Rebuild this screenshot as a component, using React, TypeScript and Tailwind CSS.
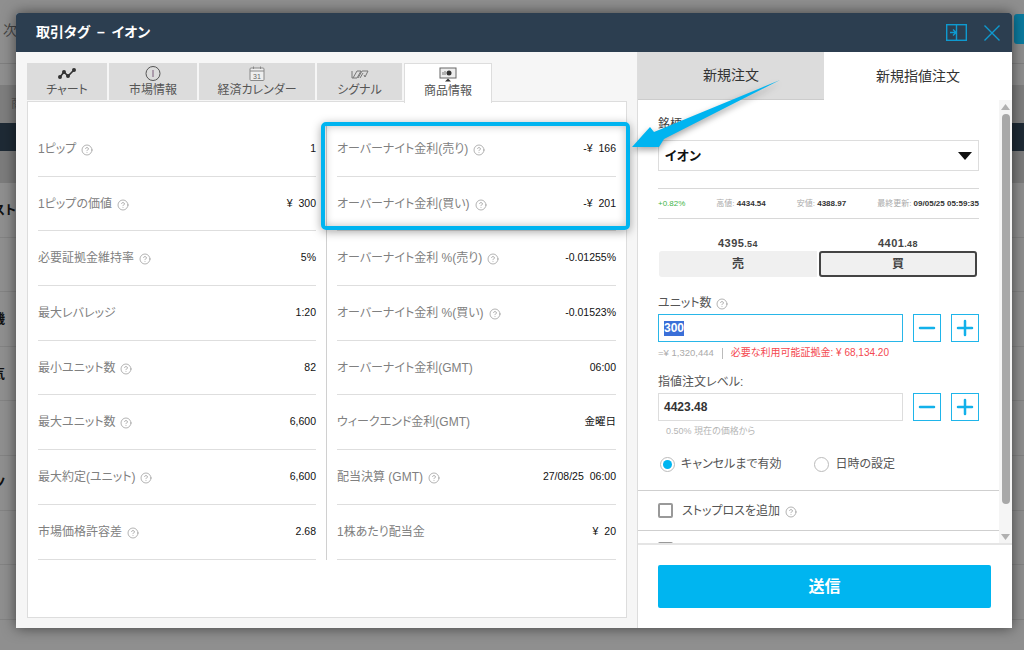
import { CircleHelp, Minus, Plus } from "lucide-react";
import type { ReactNode } from "react";

const JP = "font-['Liberation_Sans','Noto_Sans_CJK_JP',sans-serif] [font-feature-settings:'palt']";

const leftRows = [
  { label: "1ピップ", value: "1", help: true },
  { label: "1ピップの価値", value: "¥ 300", help: true },
  { label: "必要証拠金維持率", value: "5%", help: true },
  { label: "最大レバレッジ", value: "1:20", help: false },
  { label: "最小ユニット数", value: "82", help: true },
  { label: "最大ユニット数", value: "6,600", help: true },
  { label: "最大約定(ユニット)", value: "6,600", help: true },
  { label: "市場価格許容差", value: "2.68", help: true },
];

const rightRows = [
  { label: "オーバーナイト金利(売り)", value: "-¥ 166", help: true },
  { label: "オーバーナイト金利(買い)", value: "-¥ 201", help: true },
  { label: "オーバーナイト金利 %(売り)", value: "-0.01255%", help: true },
  { label: "オーバーナイト金利 %(買い)", value: "-0.01523%", help: true },
  { label: "オーバーナイト金利(GMT)", value: "06:00", help: false },
  { label: "ウィークエンド金利(GMT)", value: "金曜日", help: false },
  { label: "配当決算 (GMT)", value: "27/08/25 06:00", help: true },
  { label: "1株あたり配当金", value: "¥ 20", help: false },
];

const backgroundRows = [
  { text: "スト", pad: "pr-[1008px]" },
  { text: "", pad: "" },
  { text: "機", pad: "pr-[1019px]" },
  { text: "気", pad: "pr-[1019px]" },
  { text: "", pad: "" },
  { text: "ノ", pad: "pr-[1019px]" },
  { text: "", pad: "" },
  { text: "", pad: "" },
];

const Help = () => (
  <CircleHelp size={12} strokeWidth={1.5} className="ml-[5px] mt-[2px] shrink-0 text-[#999]" />
);

const InfoRow = ({ label, value, help }: { label: string; value: string; help: boolean }) => (
  <div className="flex h-[54.7px] items-center justify-between border-b-[1.5px] border-[#dedede]">
    <div className="flex items-center whitespace-nowrap text-[12px] text-[#808080]">
      {label}
      {help && <Help />}
    </div>
    <div className="whitespace-nowrap text-[10.5px] text-[#111] [word-spacing:3px]">{value}</div>
  </div>
);

const TabIcon = ({ kind }: { kind: string }) => {
  if (kind === "chart") {
    return (
      <svg width="18" height="12" viewBox="0 0 18 12" fill="none" stroke="#333" strokeWidth="1.6">
        <path d="M2 9 L6 4 L10 8 L16 2" />
        <circle cx="2" cy="9" r="1.2" fill="#333" />
        <circle cx="6" cy="4" r="1.2" fill="#333" />
        <circle cx="10" cy="8" r="1.2" fill="#333" />
        <circle cx="16" cy="2" r="1.2" fill="#333" />
      </svg>
    );
  }
  if (kind === "info") {
    return (
      <svg width="16" height="15" viewBox="0 0 16 15" fill="none" stroke="#555" strokeWidth="1">
        <circle cx="8" cy="7.5" r="7" />
        <path d="M8 4 V11" stroke="#7a5a7a" />
      </svg>
    );
  }
  if (kind === "calendar") {
    return (
      <svg width="16" height="15" viewBox="0 0 16 15" fill="none" stroke="#888" strokeWidth="1">
        <rect x="1" y="2" width="14" height="12.5" rx="1" fill="#eee" />
        <path d="M1 5 H15 M4.5 0.5 V3 M11.5 0.5 V3" />
        <text x="8" y="12.5" fontSize="7" textAnchor="middle" fill="#666" stroke="none">31</text>
      </svg>
    );
  }
  if (kind === "signal") {
    return (
      <svg width="18" height="12" viewBox="0 0 18 12" fill="none" stroke="#777" strokeWidth="1">
        <path d="M1 3 V10 H6 L10 3 H6 L2 10" />
        <path d="M7 10 L11 3 H17 L14 9 L13 7 M9 10 L12 5" />
      </svg>
    );
  }
  return (
    <svg width="18" height="15" viewBox="0 0 18 15" fill="none">
      <rect x="1" y="1" width="16" height="10" fill="#eee" stroke="#666" strokeWidth="1" />
      <circle cx="10" cy="6" r="2.5" fill="#333" />
      <path d="M4 8 V5 M6 8 V4" stroke="#777" />
      <path d="M6 14.5 L9 11.5 L12 14.5 Z" fill="#333" />
    </svg>
  );
};

const Tab = ({ label, icon, width, active }: { label: string; icon: string; width: string; active?: boolean }) => (
  <div
    className={`${width} flex shrink-0 flex-col items-center text-[12px] leading-[16px] text-[#555] ${
      active
        ? "relative z-10 -mb-[2px] h-[40px] border border-b-0 border-[#ddd] bg-white pt-[3px]"
        : "h-[37px] bg-[#dcdcdc] pt-[3px]"
    }`}
  >
    <div className="flex h-[15px] items-center">
      <TabIcon kind={icon} />
    </div>
    <span className="mt-[1px]">{label}</span>
  </div>
);

const StepButton = ({ children }: { children: ReactNode }) => (
  <div className="flex h-[28px] w-[28px] items-center justify-center border-[1.5px] border-[#1fb5ea] text-[#12b1ea]">
    {children}
  </div>
);

const Stepper = () => (
  <div className="ml-[10px] flex gap-[10px]">
    <StepButton>
      <Minus size={24} strokeWidth={2.5} />
    </StepButton>
    <StepButton>
      <Plus size={24} strokeWidth={2.5} />
    </StepButton>
  </div>
);

const Price = ({ whole, decimals }: { whole: string; decimals: string }) => (
  <span className="h-[14px]">
    {whole}
    <span className="text-[9px]">{decimals}</span>
  </span>
);

const StatLabel = ({ label, value }: { label: string; value: string }) => (
  <span className="whitespace-nowrap">
    <span className="text-[#aaa]">{label} </span>
    <span className="font-semibold text-[#333]">{value}</span>
  </span>
);

const OrderForm = () => (
  <div className="flex min-h-0 flex-1 overflow-hidden">
    <div className="min-w-0 flex-1 overflow-hidden">
      <div className="px-[20px]">
        <div className="pt-[16px] text-[12px] leading-[16px] text-[#444]">銘柄</div>
        <div className="mt-[8px] flex h-[31px] items-center justify-between border border-[#ddd] pl-[6px] pr-[6px] text-[13px] font-bold text-[#111]">
          イオン
          <svg width="14" height="8" viewBox="0 0 14 8">
            <path d="M0 0 H14 L7 8 Z" fill="#111" />
          </svg>
        </div>
        <div className="mt-[17px] flex h-[31px] items-center justify-between border-y border-[#d8d8d8] text-[8px]">
          <span className="text-[#43b54a]">+0.82%</span>
          <StatLabel label="高値:" value="4434.54" />
          <StatLabel label="安値:" value="4388.97" />
          <StatLabel label="最終更新:" value="09/05/25 05:59:35" />
        </div>
        <div className="mt-[17px] grid h-[14px] w-[320px] grid-cols-2 text-center text-[11px] font-bold leading-[14px] tracking-[0.4px] text-[#444]">
          <Price whole="4395" decimals=".54" />
          <Price whole="4401" decimals=".48" />
        </div>
        <div className="ml-[1px] mt-[1px] flex h-[26px] w-[318px] gap-[2px] text-[12px] font-bold text-[#444]">
          <div className="flex w-[158px] items-center justify-center rounded-l-[3px] bg-[#f0f0f0]">売</div>
          <div className="flex w-[158px] items-center justify-center rounded-[3px] border-2 border-[#444] bg-[#f0f0f0]">買</div>
        </div>
        <div className="mt-[17px] flex h-[18px] items-center text-[12px] text-[#555]">
          ユニット数
          <Help />
        </div>
        <div className="mt-[2px] flex">
          <div className="flex h-[28px] w-[245px] items-center border border-[#29b6e8] pl-[5px] text-[12px] font-bold">
            <span className="bg-[#3a6fd8] leading-[15px] text-white">300</span>
          </div>
          <Stepper />
        </div>
        <div className="mt-[5px] flex h-[12px] items-center text-[9.5px] leading-[12px]">
          <span className="text-[#aaa]">=¥ 1,320,444</span>
          <span className="mx-[8px] h-[11px] w-px bg-[#bbb]" />
          <span className="text-[10px] text-[#f4484f]">必要な利用可能証拠金: ¥ 68,134.20</span>
        </div>
        <div className="mt-[14px] h-[18px] text-[12px] leading-[18px] text-[#555]">指値注文レベル:</div>
        <div className="mt-[2px] flex">
          <div className="flex h-[28px] w-[245px] items-center border border-[#ddd] pl-[5px] text-[12px] font-bold text-[#333]">
            4423.48
          </div>
          <Stepper />
        </div>
        <div className="mt-[4px] pl-[8px] text-[9px] leading-[12px] text-[#b5b5b5]">0.50% 現在の価格から</div>
        <div className="mt-[19px] flex h-[16px] items-center pl-[2px] text-[12px] text-[#555]">
          <span className="flex h-[15px] w-[15px] items-center justify-center rounded-full border border-[#bbb]">
            <span className="h-[9px] w-[9px] rounded-full bg-[#00b5f0]" />
          </span>
          <span className="ml-[6px]">キャンセルまで有効</span>
          <span className="ml-[32px] h-[15px] w-[15px] rounded-full border border-[#bbb]" />
          <span className="ml-[7px]">日時の設定</span>
        </div>
      </div>
      <div className="mt-[18px] flex h-[41px] items-center border-y border-[#cfcfcf] pl-[20px] text-[12px] text-[#555]">
        <span className="h-[15px] w-[15px] rounded-[2px] border-2 border-[#999]" />
        <span className="ml-[9px]">ストップロスを追加</span>
        <Help />
      </div>
      <div className="ml-[20px] mt-[11px] h-[15px] w-[15px] rounded-[2px] border-2 border-[#999]" />
    </div>
    <div className="flex w-[13px] shrink-0 flex-col items-center bg-[#f5f5f5] pb-[3px] pt-[4px]">
      <svg width="9" height="6" viewBox="0 0 9 6">
        <path d="M0 6 H9 L4.5 0 Z" fill="#b0b0b0" />
      </svg>
      <div className="mt-[4px] h-[390px] w-[8px] rounded-[4px] bg-[#a8a8a8]" />
      <div className="flex-1" />
      <svg width="9" height="6" viewBox="0 0 9 6">
        <path d="M0 0 H9 L4.5 6 Z" fill="#b0b0b0" />
      </svg>
    </div>
  </div>
);

export default function App() {
  return (
    <div className={`${JP} relative h-[650px] w-[1024px] overflow-hidden bg-[#8f8f8f]`}>
      {/* dimmed page behind the dialog */}
      <div className="flex h-[64px] justify-between border-b border-[#7f7f7f]">
        <span className="pl-[3px] pt-[20px] text-[14px] text-[#444]">次</span>
        <div className="mt-[14px] h-[30px] w-[10px] rounded-l-[3px] bg-[#0b7a9e]" />
      </div>
      <div className="flex h-[21px]" />
      <div className="flex h-[38px] items-center bg-[#7e7e7e] pl-[11px] text-[12px] text-[#555]">商</div>
      <div className="h-[28px] bg-[#1e2a35]" />
      <div className="h-[32px] bg-[#7c7c7c]" />
      {backgroundRows.map((row, index) => (
        <div key={index} className={`flex h-[54.6px] items-center justify-end border-b border-[#838383] text-[13px] font-bold text-[#111] ${row.pad}`}>
          <span className="whitespace-nowrap">{row.text}</span>
        </div>
      ))}

      {/* dialog */}
      <div className="absolute left-4 top-[13px] flex h-[615px] w-[996px] flex-col overflow-hidden rounded-t-[3px] bg-white shadow-[0_0_14px_rgba(0,0,0,0.55)]">
        <div className="flex h-[39px] shrink-0 items-center justify-between bg-[#2c3e50] pl-[20px] pr-[12px]">
          <span className="text-[14px] font-bold text-white [word-spacing:3px]">取引タグ – イオン</span>
          <div className="flex items-center gap-[17px] text-[#0e9ad0]">
            <svg width="21" height="17" viewBox="0 0 21 17" fill="none" stroke="currentColor" strokeWidth="1.4">
              <rect x="0.7" y="0.7" width="19.6" height="15.6" />
              <path d="M10.5 1 V16 M4 8.5 H9.5 M7 5.5 L10 8.5 L7 11.5" />
            </svg>
            <svg width="16" height="16" viewBox="0 0 16 16" fill="none" stroke="currentColor" strokeWidth="1.4">
              <path d="M0.5 0.5 L15.5 15.5 M15.5 0.5 L0.5 15.5" />
            </svg>
          </div>
        </div>
        <div className="flex min-h-0 flex-1">
          <div className="flex w-[622px] shrink-0 flex-col border-r border-[#ddd] bg-[#f6f6f6] pb-[10px] pl-[11px] pr-[10px] pt-[11px]">
            <div className="flex h-[38px] shrink-0 gap-[2px]">
              <Tab label="チャート" icon="chart" width="w-[80px]" />
              <Tab label="市場情報" icon="info" width="w-[88px]" />
              <Tab label="経済カレンダー" icon="calendar" width="w-[116px]" />
              <Tab label="シグナル" icon="signal" width="w-[85px]" />
              <Tab label="商品情報" icon="product" width="w-[88px]" active />
            </div>
            <div className="min-h-0 flex-1 border border-[#ddd] bg-white pt-[20px]">
              <div className="grid grid-cols-[299px_1fr]">
                <div className="border-r border-[#d0d0d0] pl-[10px] pr-[10px]">
                  {leftRows.map((row) => (
                    <InfoRow key={row.label} {...row} />
                  ))}
                </div>
                <div className="pl-[10px] pr-[10px]">
                  {rightRows.map((row) => (
                    <InfoRow key={row.label} {...row} />
                  ))}
                </div>
              </div>
            </div>
          </div>
          <div className="flex min-w-0 flex-1 flex-col">
            <div className="flex h-[48px] shrink-0 text-[14px] text-[#333]">
              <div className="flex w-[186px] items-center justify-center border-b border-[#ccc] bg-[#dcdcdc]">新規注文</div>
              <div className="flex flex-1 items-center justify-center">新規指値注文</div>
            </div>
            <OrderForm />
            <div className="h-[85px] shrink-0 border-t-2 border-[#e5e5e5] px-[20px] pt-[20px]">
              <div className="flex h-[43px] w-[333px] items-center justify-center rounded-[2px] bg-[#00b5f0] text-[16px] font-bold text-white">
                送信
              </div>
            </div>
          </div>
        </div>
      </div>

      {/* annotation over the screenshot */}
      <div className="absolute left-[321px] top-[122px] h-[108px] w-[309px] rounded-[5px] border-[4px] border-[#00b4f0] shadow-[0_2px_10px_rgba(0,0,0,0.35),inset_0_0_8px_rgba(0,0,0,0.25)]" />
      <svg className="absolute left-[625px] top-[75px] drop-shadow-[0_3px_3px_rgba(0,0,0,0.35)]" width="165" height="80" viewBox="625 75 165 80">
        <path d="M780 80 L654 132 L650 127 L632 147 L659 147 L664 139 Z" fill="#00b4f0" />
      </svg>
    </div>
  );
}
